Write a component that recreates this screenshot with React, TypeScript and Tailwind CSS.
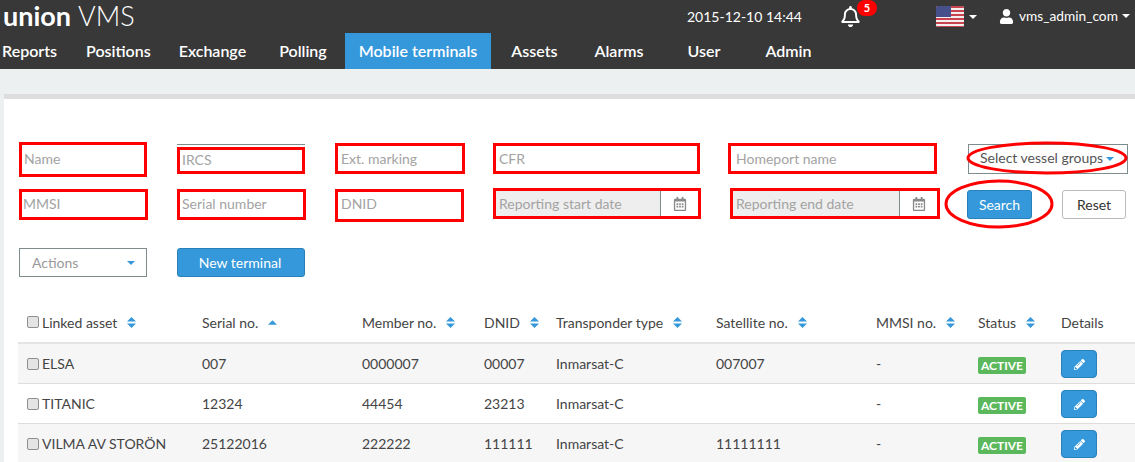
import { FaRegBell, FaUser, FaRegCalendarAlt, FaPencilAlt } from 'react-icons/fa'

const navItems = [
  { label: 'Reports', className: 'ml-[2px]' },
  { label: 'Positions', className: 'ml-[29px]' },
  { label: 'Exchange', className: 'ml-[28px]' },
  { label: 'Polling', className: 'ml-[33px]' },
  { label: 'Mobile terminals', className: 'ml-[18px] px-[14px] bg-[#3498db]' },
  { label: 'Assets', className: 'ml-[20px]' },
  { label: 'Alarms', className: 'ml-[37px]' },
  { label: 'User', className: 'ml-[44px]' },
  { label: 'Admin', className: 'ml-[45px]' },
]

const columns = [
  { label: 'Linked asset', sort: 'both', check: true },
  { label: 'Serial no.', sort: 'up' },
  { label: 'Member no.', sort: 'both' },
  { label: 'DNID', sort: 'both' },
  { label: 'Transponder type', sort: 'both' },
  { label: 'Satellite no.', sort: 'both' },
  { label: 'MMSI no.', sort: 'both' },
  { label: 'Status', sort: 'both' },
  { label: 'Details', sort: 'none' },
]

const rows = [
  { name: 'ELSA', serial: '007', member: '0000007', dnid: '00007', satellite: '007007' },
  { name: 'TITANIC', serial: '12324', member: '44454', dnid: '23213', satellite: '' },
  { name: 'VILMA AV STORÖN', serial: '25122016', member: '222222', dnid: '111111', satellite: '11111111' },
]

const gridClass = 'grid grid-cols-[175px_160px_122px_72px_160px_160px_102px_83px_1fr] items-center'

function Caret({ className = 'border-t-white' }: { className?: string }) {
  return <span className={`inline-block w-0 h-0 border-x-[4px] border-x-transparent border-t-[4px] ${className}`} />
}

function SortIcon({ kind }: { kind: string }) {
  if (kind === 'none') return null
  return (
    <svg width="9" height="11" viewBox="0 0 9 11" className="ml-[10px] shrink-0" fill="#3498db">
      {kind === 'up' && <path d="M4.5 3.3 L9 7.7 H0 Z" />}
      {kind === 'both' && <path d="M4.5 0 L9 4.4 H0 Z" />}
      {kind === 'both' && <path d="M4.5 11 L9 6.6 H0 Z" />}
    </svg>
  )
}

function Checkbox() {
  return <span className="inline-block w-[12px] h-[12px] rounded-[2px] border border-[#8f8f8f] bg-[#e4e4e4] mr-[3px] shrink-0" />
}

function Flag() {
  return (
    <svg width="28" height="21" viewBox="0 0 28 21" className="rounded-[2px]">
      <rect width="28" height="21" fill="#f4f0f0" />
      <rect y="0" width="28" height="2" fill="#c9434f" />
      <rect y="4" width="28" height="2" fill="#c9434f" />
      <rect y="8" width="28" height="2" fill="#c9434f" />
      <rect y="12" width="28" height="2" fill="#c9434f" />
      <rect y="16" width="28" height="2" fill="#c9434f" />
      <rect y="20" width="28" height="1" fill="#c9434f" />
      <rect width="15" height="11" fill="#46508a" />
    </svg>
  )
}

function TextField({ placeholder, className }: { placeholder: string; className: string }) {
  return (
    <div className={`h-[31px] border-[3px] border-[#ff0000] pl-[3px] flex items-center text-[14px] text-[#a3a3a3] bg-white ${className}`}>
      {placeholder}
    </div>
  )
}

function DateField({ placeholder, className }: { placeholder: string; className: string }) {
  return (
    <div className={`h-[31px] border-[3px] border-[#ff0000] flex text-[14px] text-[#a3a3a3] ${className}`}>
      <div className="flex-1 bg-[#eeeeee] border-r border-[#7f8c8d] pl-[3px] flex items-center">{placeholder}</div>
      <div className="w-[37px] flex items-center justify-center text-[#888] bg-white">
        <FaRegCalendarAlt size={14} />
      </div>
    </div>
  )
}

export default function App() {
  return (
    <div className="relative w-[1135px] h-[462px] overflow-hidden bg-[#ecf0f1] font-['Lato','Open_Sans',sans-serif] text-[14px] text-[#444]">
      <header className="h-[69px] bg-[#383838] text-white">
        <div className="h-[33px] flex items-center">
          <div className="ml-[3px] w-[130px] text-[27px] leading-none -mt-[2px] whitespace-nowrap">
            <span className="font-bold">union</span> <span className="font-light">VMS</span>
          </div>
          <div className="ml-[554px] w-[113px] text-[14px] whitespace-nowrap">2015-12-10 14:44</div>
          <div className="relative ml-[40px] w-[30px]">
            <FaRegBell size={21} />
            <span className="absolute -top-[6px] left-[17px] w-[20px] h-[16px] rounded-full bg-[#ff0000] text-[11px] font-bold leading-[16px] text-center">5</span>
          </div>
          <div className="ml-[66px] flex items-center gap-[5px]">
            <Flag />
            <Caret />
          </div>
          <div className="ml-[22px] flex items-center">
            <FaUser size={15} />
            <span className="ml-[5px] text-[13.7px]">vms_admin_com</span>
            <span className="ml-[4px] flex"><Caret /></span>
          </div>
        </div>
        <nav className="h-[36px] flex text-[16px] font-semibold">
          {navItems.map((item) => (
            <div key={item.label} className={`h-full flex items-center ${item.className}`}>
              {item.label}
            </div>
          ))}
        </nav>
      </header>

      <main className="mt-[25px] ml-[4px] h-[368px] bg-white border-t-[5px] border-[#dddddd]">
        <section className="pl-[15px] pt-[44px]">
          <div className="flex items-start">
            <TextField placeholder="Name" className="w-[128px] !h-[35px] -mt-[1px] pb-[2px] !pl-[2px]" />
            <div className="ml-[30px] w-[128px] mt-[1px] border-t border-[#7f8c8d]">
              <TextField placeholder="IRCS" className="w-[128px] !h-[27px] mt-[2px] pb-[2px] !pl-[2px]" />
            </div>
            <TextField placeholder="Ext. marking" className="ml-[30px] w-[130px]" />
            <TextField placeholder="CFR" className="ml-[28px] w-[207px]" />
            <TextField placeholder="Homeport name" className="ml-[28px] w-[209px] !pl-[5px]" />
            <div className="ml-[31px] w-[160px] h-[30px] border border-[#7f8c8d] mt-[1px] flex items-center pl-[11px] pb-[3px] gap-[3px] text-[14px] text-[#555]">
              Select vessel groups
              <Caret className="border-t-[#3498db] mt-[3px]" />
            </div>
          </div>
          <div className="flex items-start mt-[12px]">
            <TextField placeholder="MMSI" className="w-[129px] pb-[2px] !pl-[1px]" />
            <TextField placeholder="Serial number" className="ml-[29px] w-[129px] pb-[2px] !pl-[2px]" />
            <TextField placeholder="DNID" className="ml-[29px] w-[129px] !h-[33px] pb-[4px]" />
            <DateField placeholder="Reporting start date" className="ml-[29px] w-[208px] -mt-[1px]" />
            <DateField placeholder="Reporting end date" className="ml-[29px] w-[210px] -mt-[1px]" />
            <button className="ml-[27px] mt-[1px] w-[65px] h-[29px] rounded-[3px] bg-[#3498db] border border-[#2a80b9] text-white text-[14px]">Search</button>
            <button className="ml-[30px] mt-[1px] w-[64px] h-[29px] rounded-[3px] border border-[#bbb] text-[#333] text-[14px]">Reset</button>
          </div>
          <div className="flex items-center mt-[26px]">
            <div className="w-[128px] h-[29px] border border-[#7f8c8d] flex items-center justify-between pl-[12px] pr-[11px] text-[#999]">
              Actions
              <Caret className="border-t-[#3498db]" />
            </div>
            <button className="ml-[30px] w-[128px] h-[29px] rounded-[3px] bg-[#3498db] border border-[#2a80b9] text-white text-[14px] pr-[2px]">New terminal</button>
          </div>
        </section>

        <section className="ml-[14px] mt-[25px]">
          <div className={`${gridClass} h-[42px] border-b-[2px] border-[#e4e4e4]`}>
            {columns.map((col) => (
              <div key={col.label} className="pl-[9px] flex items-center">
                {col.check && <Checkbox />}
                {col.label}
                <SortIcon kind={col.sort} />
              </div>
            ))}
          </div>
          {rows.map((row, i) => (
            <div key={row.name} className={`${gridClass} h-[40px] border-b border-[#dddddd] ${i % 2 === 0 ? 'bg-[#f6f6f6]' : 'bg-white'}`}>
              <div className="pl-[9px] flex items-center"><Checkbox />{row.name}</div>
              <div className="pl-[9px]">{row.serial}</div>
              <div className="pl-[9px]">{row.member}</div>
              <div className="pl-[9px]">{row.dnid}</div>
              <div className="pl-[9px]">Inmarsat-C</div>
              <div className="pl-[9px]">{row.satellite}</div>
              <div className="pl-[9px]">-</div>
              <div className="pl-[9px]">
                <span className="inline-block w-[48px] h-[17px] mt-[2px] rounded-[2px] bg-[#5cb85c] text-white text-[12px] font-bold leading-[17px] text-center align-middle">ACTIVE</span>
              </div>
              <div className="pl-[9px]">
                <button className="w-[36px] h-[28px] mt-[1px] rounded-[4px] bg-[#3498db] border border-[#2a80b9] text-white flex items-center justify-center">
                  <FaPencilAlt size={11} />
                </button>
              </div>
            </div>
          ))}
        </section>
      </main>

      {/* hand drawn annotations on top of the screenshot */}
      <svg width="1135" height="462" className="absolute left-0 top-0 pointer-events-none" fill="none" stroke="#ff0000" strokeWidth="3">
        <ellipse cx="1047" cy="158" rx="79" ry="15" />
        <ellipse cx="999" cy="204" rx="53" ry="23" />
      </svg>
    </div>
  )
}
